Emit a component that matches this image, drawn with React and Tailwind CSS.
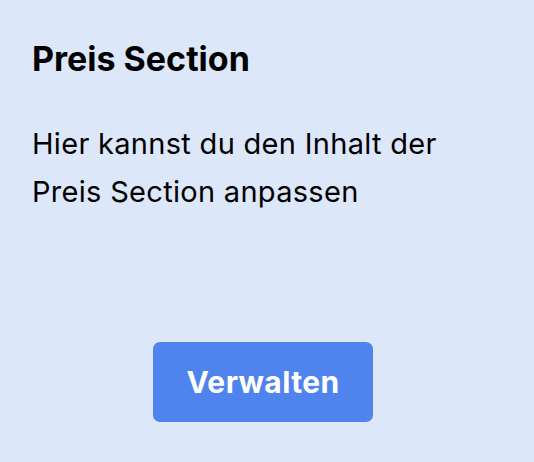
import React from "react";

const App = () => {
  return (
    <div className="w-[534px] h-[462px] bg-[#dde7fa] flex flex-col pt-[35px] pl-8 pr-10 pb-10 font-['Inter',sans-serif] text-black">
      <h2 className="text-[34px] leading-[48px] font-bold">Preis Section</h2>
      <p className="mt-[37px] max-w-[440px] text-[29px] leading-[48px] tracking-[0.3px]">
        Hier kannst du den Inhalt der Preis Section anpassen
      </p>
      <div className="mt-auto flex justify-center">
        <button className="w-[220px] h-[80px] rounded-[7px] bg-[#4f83ee] text-white text-[30px] font-bold tracking-[0.4px]">
          Verwalten
        </button>
      </div>
    </div>
  );
};

export default App;
